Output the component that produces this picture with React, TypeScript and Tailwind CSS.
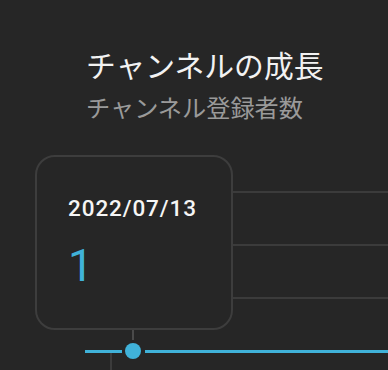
import React from "react";

export default function App() {
  return (
    <div className="w-[388px] h-[370px] bg-[#262626] overflow-hidden flex flex-col">
      <div className="shrink-0 pl-[86px] pt-[47px] flex flex-col" style={{ fontFamily: '"Noto Sans CJK JP", "Noto Sans", sans-serif' }}>
        <div className="text-[29.8px] leading-[34px] text-[#f2f2f2]">チャンネルの成長</div>
        <div className="mt-[12px] text-[24.2px] leading-[28px] text-[#9a9a9a]">チャンネル登録者数</div>
      </div>
      <div className="shrink-0 flex mt-[34px]">
        <div className="ml-[35px] w-[198px] h-[175px] shrink-0 rounded-[20px] border-2 border-[#3d3d3d] flex flex-col pl-[31px] pt-[39px]" style={{ fontFamily: 'Roboto, "Liberation Sans", sans-serif' }}>
          <div className="text-[22.5px] leading-[24px] font-medium tracking-[0.9px] text-[#f5f5f5]">2022/07/13</div>
          <div className="mt-[23px] text-[45px] leading-[45px] font-normal text-[#40b2d9]">1</div>
        </div>
        <div className="flex-1 flex flex-col pt-[36px]">
          <div className="h-[2px] bg-[#3b3b3b]"></div>
          <div className="mt-[51px] h-[2px] bg-[#3b3b3b]"></div>
          <div className="mt-[51px] h-[2px] bg-[#3b3b3b]"></div>
        </div>
      </div>
      <div className="shrink-0 ml-[132px] w-[2px] h-[10px] bg-[#4a4a4a]"></div>
      <div className="shrink-0 flex items-center ml-[85px] mt-[3px]">
        <div className="w-[37px] h-[3px] bg-[#40b2d9]"></div>
        <div className="ml-[3px] w-[16px] h-[16px] rounded-full bg-[#40b2d9]"></div>
        <div className="ml-[4px] flex-1 h-[3px] bg-[#40b2d9]"></div>
      </div>
      <div className="shrink-0 ml-[110px] -mt-[6px] w-[2px] h-[20px] bg-[#3b3b3b]"></div>
    </div>
  );
}
